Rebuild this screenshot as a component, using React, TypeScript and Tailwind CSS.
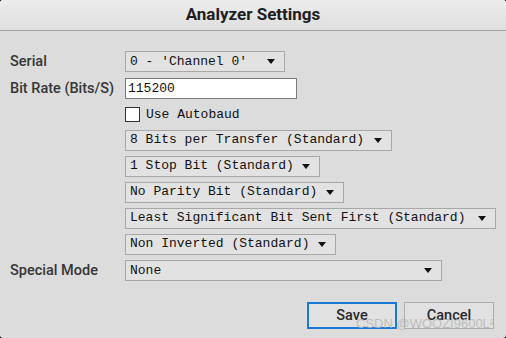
import React from "react";

const mono = { fontFamily: '"Liberation Mono", "DejaVu Sans Mono", monospace' };

function Arrow() {
  return (
    <svg width="8" height="5" viewBox="0 0 8 5" className="shrink-0">
      <polygon points="0,0 8,0 4,5" fill="#111" />
    </svg>
  );
}

function Select({ text, w }: { text: string; w: string }) {
  return (
    <div
      className={`${w} h-[21px] flex items-center justify-between pl-[4px] pr-[9px] border border-[#a8a8a8] bg-[#e2e2e2] text-[13px] text-[#111] whitespace-pre`}
      style={mono}
    >
      <span>{text}</span>
      <Arrow />
    </div>
  );
}

function Row({ label, children }: { label?: string; children: React.ReactNode }) {
  return (
    <div className="flex items-center">
      <div className="w-[115px] text-[14.5px] font-medium text-[#363636] whitespace-nowrap">{label}</div>
      {children}
    </div>
  );
}

export default function App() {
  return (
    <div className="w-[506px] h-[338px] bg-black">
      <div
        className="w-full h-full rounded-[3px] bg-[#dcdcdc] flex flex-col overflow-hidden relative"
        style={{ fontFamily: 'Roboto, "Liberation Sans", sans-serif' }}
      >
        <div className="h-[31px] shrink-0 flex items-center justify-center bg-gradient-to-b from-[#ececec] to-[#dfdfdf] border-b border-[#a6a6a6] text-[17px] font-bold text-[#1e1e1e]">
          Analyzer Settings
        </div>
        <div className="flex flex-col gap-[5px] pl-[10px] pt-[20px]">
          <Row label="Serial">
            <Select text="0 - 'Channel 0'" w="w-[160px]" />
          </Row>
          <Row label="Bit Rate (Bits/S)">
            <div
              className="w-[172px] h-[21px] border border-[#7a7a7a] bg-white flex items-center pl-[2px] text-[13px] text-[#111]"
              style={mono}
            >
              115200
            </div>
          </Row>
          <Row>
            <div className="h-[20px] flex items-center gap-[6px]">
              <div className="w-[15px] h-[15px] border border-[#333] bg-white" />
              <span className="text-[13px] text-[#111]" style={mono}>
                Use Autobaud
              </span>
            </div>
          </Row>
          <Row>
            <Select text="8 Bits per Transfer (Standard)" w="w-[267px]" />
          </Row>
          <Row>
            <Select text="1 Stop Bit (Standard)" w="w-[195px]" />
          </Row>
          <Row>
            <Select text="No Parity Bit (Standard)" w="w-[219px]" />
          </Row>
          <Row>
            <Select text="Least Significant Bit Sent First (Standard)" w="w-[371px]" />
          </Row>
          <Row>
            <Select text="Non Inverted (Standard)" w="w-[211px]" />
          </Row>
          <Row label="Special Mode">
            <Select text="None" w="w-[317px]" />
          </Row>
        </div>
        <div className="flex justify-end gap-[7px] pr-[12px] pt-[21px]">
          <button className="w-[90px] h-[27px] border-2 border-[#1a7ad6] bg-[#e1e1e1] text-[14.5px] font-medium text-[#2a2a2a]">
            Save
          </button>
          <button className="w-[90px] h-[27px] border border-[#adadad] bg-[#e1e1e1] text-[14.5px] font-medium text-[#2a2a2a]">
            Cancel
          </button>
        </div>
        <div className="absolute left-[356px] top-[314px] text-[13px] text-[#b4b4b4]/80 whitespace-nowrap" style={{ fontFamily: '"Liberation Sans", sans-serif' }}>
          CSDN @WOOZI9600L²
        </div>
      </div>
    </div>
  );
}
